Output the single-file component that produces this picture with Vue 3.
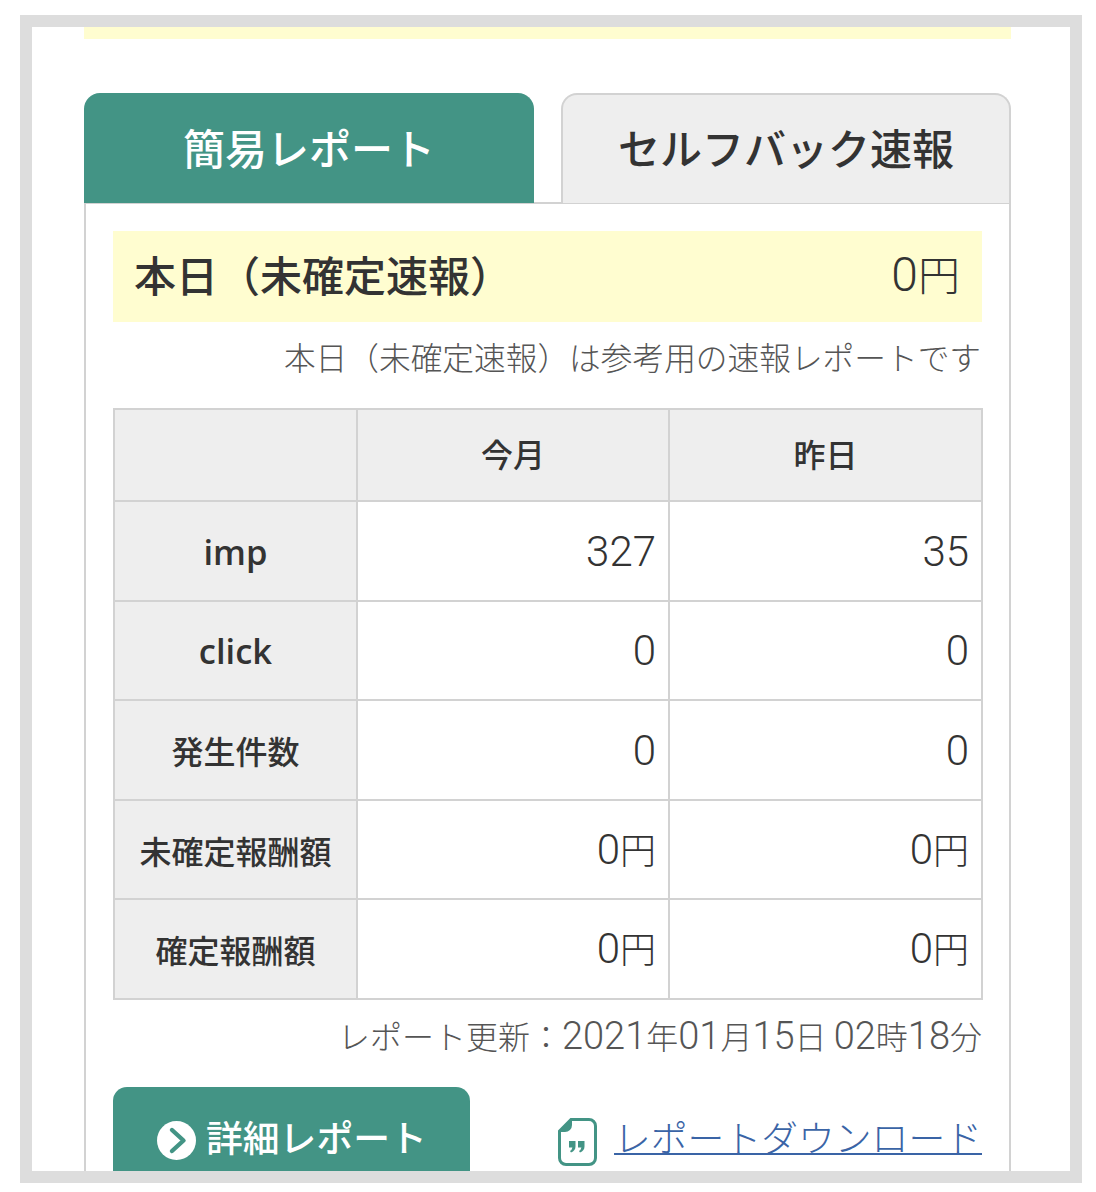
<script setup>
const rows = [
  { label: 'imp', a: '327', b: '35', latin: true, h: 'r100' },
  { label: 'click', a: '0', b: '0', latin: true, h: 'r99' },
  { label: '発生件数', a: '0', b: '0', h: 'r100' },
  { label: '未確定報酬額', a: '0', b: '0', yen: true, h: 'r99' },
  { label: '確定報酬額', a: '0', b: '0', yen: true, h: 'r100' },
]
</script>

<template>
  <div class="frame">
    <div class="page">
      <div class="top-bar"></div>
      <div class="tabs">
        <div class="tab active">簡易レポート</div>
        <div class="tab">セルフバック速報</div>
      </div>
      <div class="panel">
        <div class="today">
          <span class="today-title">本日（未確定速報）</span>
          <span class="today-value">0<span class="today-yen">円</span></span>
        </div>
        <p class="note">本日（未確定速報）は参考用の速報レポートです</p>
        <table class="report">
          <colgroup>
            <col class="c1" /><col class="c2" /><col class="c3" />
          </colgroup>
          <thead>
            <tr class="head">
              <th></th>
              <th><span class="lift">今月</span></th>
              <th><span class="lift">昨日</span></th>
            </tr>
          </thead>
          <tbody>
            <tr v-for="r in rows" :key="r.label" :class="r.h">
              <th :class="{ latin: r.latin }">{{ r.label }}</th>
              <td><span class="value" :class="{ lift: r.yen }">{{ r.a }}<span v-if="r.yen" class="yen">円</span></span></td>
              <td><span class="value" :class="{ lift: r.yen }">{{ r.b }}<span v-if="r.yen" class="yen">円</span></span></td>
            </tr>
          </tbody>
        </table>
        <p class="updated">レポート更新：<span class="d">2021</span>年<span class="d">01</span>月<span class="d">15</span>日 <span class="d">02</span>時<span class="d">18</span>分</p>
        <div class="actions">
          <a class="detail">
            <svg class="arrow" viewBox="0 0 39 39" width="39" height="39">
              <circle cx="19.5" cy="19.5" r="19.5" fill="#fff" />
              <path d="M15 9 L26.5 19.5 L15 30" fill="none" stroke="#439485" stroke-width="4.4" stroke-linecap="round" stroke-linejoin="round" />
            </svg>
            <span>詳細レポート</span>
          </a>
          <a class="download">
            <svg class="file" viewBox="0 0 39 48" width="39" height="48">
              <path d="M13 1.5 H31 a6.5 6.5 0 0 1 6.5 6.5 V40 a6.5 6.5 0 0 1 -6.5 6.5 H8 a6.5 6.5 0 0 1 -6.5 -6.5 V13 Z" fill="none" stroke="#439485" stroke-width="3" />
              <path d="M14 1 V7 a7 7 0 0 1 -7 7 H1 Z" fill="#439485" />
              <path d="M11 23 h6.5 v5.5 q0 4 -4.5 6 l-1 -1.6 q2 -1 2.4 -3.4 H11 Z M20 23 h6.5 v5.5 q0 4 -4.5 6 l-1 -1.6 q2 -1 2.4 -3.4 H20 Z" fill="#439485" />
            </svg>
            <span class="link">レポートダウンロード</span>
          </a>
        </div>
      </div>
    </div>
  </div>
</template>

<style>
html, body { margin: 0; background: #fff; }
</style>

<style scoped>
.frame {
  box-sizing: border-box;
  width: 1062px;
  height: 1168px;
  margin: 15px 0 0 20px;
  border: 12px solid #ddd;
  overflow: hidden;
  font-family: "Noto Sans CJK JP", "Noto Sans", sans-serif;
  color: #333;
  background: #fff;
}
.page { padding: 0 59px 0 52px; }
.top-bar { height: 12px; background: #fffdd0; }
.tabs {
  display: flex;
  justify-content: space-between;
  margin-top: 54px;
}
.tab {
  box-sizing: border-box;
  width: 450px;
  height: 110px;
  display: flex;
  align-items: center;
  justify-content: center;
  padding-bottom: 6px;
  font-size: 42px;
  font-weight: 500;
  background: #eee;
  border: 2px solid #d2d2d2;
  border-bottom: none;
  border-radius: 16px 16px 0 0;
}
.tab.active {
  background: #439485;
  border-color: #439485;
  color: #fff;
}
.panel {
  box-sizing: border-box;
  border: 2px solid #d2d2d2;
  margin-top: -1px;
  padding: 27px 27px 0;
}
.today {
  height: 91px;
  background: #fffdd0;
  display: flex;
  align-items: center;
  justify-content: space-between;
  padding: 0 22px 6px 21px;
  box-sizing: border-box;
}
.today-title { font-size: 42px; font-weight: 500; }
.today-value {
  font-family: Roboto, "Noto Sans CJK JP", sans-serif;
  font-size: 48px;
  font-weight: 300;
  line-height: 56px;
}
.today-yen {
  font-family: "Noto Sans CJK JP", sans-serif;
  font-size: 42px;
  font-weight: 300;
}
.value {
  font-family: Roboto, "Noto Sans CJK JP", sans-serif;
  font-size: 42px;
  font-weight: 300;
}
.yen {
  font-family: "Noto Sans CJK JP", sans-serif;
  font-size: 36px;
  font-weight: 300;
}
.note, .updated {
  margin: 0;
  text-align: right;
  font-size: 31.7px;
  line-height: 48px;
  color: #555;
  font-weight: 300;
}
.note { margin-top: 10px; padding-right: 1px; }
.report {
  margin-top: 28px;
  width: 868px;
  border-collapse: collapse;
  table-layout: fixed;
}
.c1 { width: 243px; }
.c2 { width: 312px; }
.c3 { width: 313px; }
.report th, .report td {
  border: 2px solid #d2d2d2;
  padding: 0;
}
.report th {
  background: #eee;
  font-size: 32px;
  font-weight: 500;
  text-align: center;
}
.lift { position: relative; top: -2px; }
.report th.latin {
  font-family: "Open Sans", sans-serif;
  font-weight: 600;
  font-size: 34.5px;
}
.report td {
  text-align: right;
  padding-right: 12px;
}
.head { height: 92px; }
.r100 { height: 100px; }
.r99 { height: 99px; }
.updated { margin-top: 11px; font-size: 32px; }
.d {
  font-family: Roboto, sans-serif;
  font-size: 38px;
  font-weight: 300;
}
.actions {
  margin-top: 27px;
  display: flex;
  justify-content: space-between;
  align-items: flex-start;
}
.detail {
  box-sizing: border-box;
  width: 357px;
  height: 110px;
  background: #439485;
  border-radius: 14px;
  color: #fff;
  display: flex;
  align-items: flex-start;
  gap: 10px;
  padding: 27px 0 0 44px;
  font-size: 36.8px;
  font-weight: 500;
  line-height: 44px;
}
.arrow { margin-top: 7px; flex: none; }
.download {
  display: flex;
  align-items: flex-start;
  gap: 17px;
  margin-top: 31px;
  font-size: 36.8px;
  line-height: 44px;
  font-weight: 300;
  color: #3a64a6;
}
.file { flex: none; }
.link {
  margin-top: -4px;
  text-decoration: underline;
  text-decoration-thickness: 2px;
  text-underline-offset: 1px;
}
</style>
